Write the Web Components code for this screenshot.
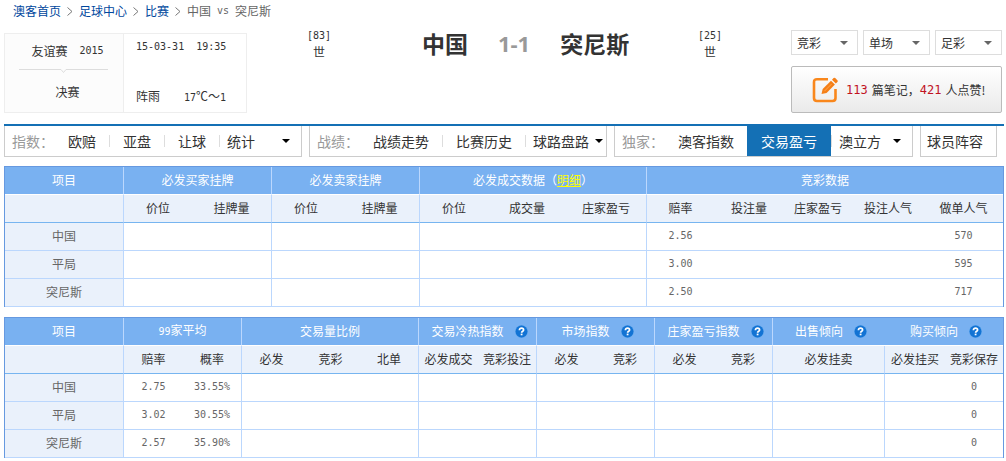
<!DOCTYPE html>
<html lang="zh-CN">
<head>
<meta charset="utf-8">
<title>中国 vs 突尼斯 - 交易盈亏</title>
<style>
html{background:#fff}
body{margin:0;font:12px/18px "Noto Sans CJK SC",sans-serif;color:#333}
</style>
</head>
<body>
<match-page></match-page>

<script>
const NUM = '.n{font:10px/18px "DejaVu Sans Mono",monospace}';

function define(name, html, setup) {
  customElements.define(name, class extends HTMLElement {
    constructor() {
      super();
      this.attachShadow({ mode: 'open' }).innerHTML = html;
    }
    connectedCallback() {
      if (setup) setup.call(this, this.shadowRoot);
    }
  });
}

define('help-icon', `
<style>:host{display:inline-flex}svg{display:block}</style>
<svg width="13" height="13" viewBox="0 0 13 13" role="img" aria-label="帮助">
  <circle cx="6.5" cy="6.5" r="6.4" fill="#5ba3ea"/>
  <circle cx="6.5" cy="6.5" r="5.9" fill="#1273d4"/>
  <path d="M4.400 5.200c0-1.300.9-2 2.100-2s2.100.7 2.100 1.800c0 1.200-2 1.300-2 2.700" fill="none" stroke="#fff" stroke-width="1.700"/>
  <rect x="5.700" y="8.600" width="1.800" height="1.700" fill="#fff"/>
</svg>`);

define('bread-crumb', `
<style>
${NUM}
:host{display:block}
nav{display:flex;align-items:center;padding:2px 9px}
a{color:#00479d;text-decoration:none}
svg{margin:0 6px}
.now{display:flex;gap:6px;color:#666}
</style>
<nav aria-label="当前位置">
  <a href="#">澳客首页</a><svg width="6" height="9"><path d="M.5.5l4.500 4-4.500 4" fill="none" stroke="#777"/></svg>
  <a href="#">足球中心</a><svg width="6" height="9"><path d="M.5.5l4.500 4-4.500 4" fill="none" stroke="#777"/></svg>
  <a href="#">比赛</a><svg width="6" height="9"><path d="M.5.5l4.500 4-4.500 4" fill="none" stroke="#777"/></svg>
  <span class="now"><span>中国</span><span class="n">vs</span><span>突尼斯</span></span>
</nav>`);

define('match-info', `
<style>
${NUM}
:host{display:grid;grid-template-columns:119px 121px;border:1px solid #eee;height:78px}
.cup{background:#fcfcfc;border-right:1px solid #eee;display:flex;flex-direction:column;align-items:center;justify-content:space-between;padding:8px 0 11px}
.row{display:flex;gap:12px}
.cup>.row{padding-left:7px}
.when{display:flex;flex-direction:column;justify-content:space-between;padding:4px 12px 5px}
.when .row{gap:12px}
.when .weather{gap:24px}
svg{display:block}
</style>
<div class="cup">
  <div class="row"><span>友谊赛</span><span class="n">2015</span></div>
  <svg width="90" height="5"><path d="M0 .5h42l2.500 3 2.500-3h42" fill="none" stroke="#ddd"/></svg>
  <div class="row">决赛</div>
</div>
<div class="when">
  <div class="row n"><span>15-03-31</span><span>19:35</span></div>
  <div class="row weather"><span>阵雨</span><span><span class="n">17</span>℃～<span class="n">1</span></span></div>
</div>`);

define('match-score', `
<style>
${NUM}
:host{display:flex;justify-content:space-between}
.rank{display:flex;flex-direction:column;align-items:center;width:24px;line-height:16px}
.rank .n{line-height:16px}
.teams{display:flex;gap:30px;align-items:center;height:30px;padding-left:22px;font-size:23px;font-weight:700}
.score{font:700 22px/30px "Open Sans",sans-serif;color:#999}
</style>
<div class="rank"><span class="n">[83]</span><span>世</span></div>
<div class="teams"><span>中国</span><span class="score">1-1</span><span>突尼斯</span></div>
<div class="rank"><span class="n">[25]</span><span>世</span></div>`);

define('lottery-select', `
<style>
:host{display:grid;flex:1;min-width:0;align-items:center}
select,svg{grid-area:1/1}
select{appearance:none;width:100%;height:25px;margin:0;padding:0 5px;border:1px solid #ddd;border-radius:0;background:#fff;font:inherit;color:#333}
svg{justify-self:end;margin-right:10px;pointer-events:none}
</style>
<select><option></option></select>
<svg width="8" height="4"><path d="M0 0h8L4 4z" fill="#666"/></svg>`,
function (root) {
  const select = root.querySelector('select');
  select.setAttribute('aria-label', this.getAttribute('label'));
  root.querySelector('option').textContent = this.getAttribute('label');
});

define('note-button', `
<style>
:host{display:block}
button{display:flex;align-items:center;width:100%;height:47px;padding:0 0 0 20px;border:1px solid #bbb;border-radius:2px;background:linear-gradient(#fff,#eaeaea);font:inherit;color:#333;white-space:nowrap}
svg{margin-right:8px;flex:none}
b{font:12px/18px "DejaVu Sans Mono",monospace;color:#c1121f}
.t{margin-left:4px}
</style>
<button type="button">
  <svg width="26" height="26" viewBox="0 0 26 26" fill="none">
    <path d="M16 2.200H5Q2 2.200 2 5.200v15.800q0 3 3 3h15.500q3 0 3-3V12" stroke="#f9871c" stroke-width="2.600"/>
    <path d="M9.500 17l1.200-5L19 3.700l3.900 3.900-8.300 8.300z" fill="#f57f17"/>
    <path d="M20 2.700l1.600-1.600q.8-.8 1.600 0L25.400 3.300q.8.800 0 1.600L23.800 6.500z" fill="#f57f17"/>
    <path d="M12.400 14.200l7.300-7.300" stroke="#ffb060" stroke-width=".8"/>
  </svg>
  <b>113</b><span class="t">篇笔记，</span><b>421</b><span class="t">人点赞!</span>
</button>`);

define('nav-group', `
<style>
:host{display:flex;align-items:center;min-width:0;height:30px;padding-left:7px;border:1px solid #ccc;border-top:0;font-size:14px;color:#999;white-space:nowrap}
:host([plain]){padding-left:6px}
.label{width:43px;flex:none}
:host([plain]) .label{display:none}
</style>
<span class="label"></span><slot></slot>`,
function (root) {
  root.querySelector('.label').textContent = this.getAttribute('label') || '';
});

define('nav-item', `
<style>
:host{display:flex;align-items:center}
:host([sep])::after{content:"";width:1px;height:12px;background:#ddd}
:host([grow]){flex:1}
a,button{font:14px/30px "Noto Sans CJK SC",sans-serif;color:#333;text-decoration:none;padding:0 13px}
:host([active]) a{background:#1470b5;color:#fff;padding:0 14px}
:host([plain]) a{padding:0}
button{display:flex;flex:1;align-items:center;justify-content:space-between;border:0;background:none;padding:0 11px 0 7px}
:host([tight]) button{padding-right:3px}
svg{display:none}
button svg{display:block}
</style>`,
function (root) {
  const menu = this.hasAttribute('grow');
  const el = document.createElement(menu ? 'button' : 'a');
  if (menu) el.type = 'button'; else el.href = '#';
  el.innerHTML = '<slot></slot><svg width="8" height="4"><path d="M0 0h8L4 4z" fill="#000"/></svg>';
  root.append(el);
});

define('match-nav', `
<style>
:host{display:block;border-top:2px solid #1470b5}
nav{display:grid;grid-template-columns:298fr 298fr 299fr 77fr;gap:7px;margin-right:7px}
</style>
<nav aria-label="数据导航">
  <nav-group label="指数："><nav-item sep>欧赔</nav-item><nav-item sep>亚盘</nav-item><nav-item sep>让球</nav-item><nav-item grow>统计</nav-item></nav-group>
  <nav-group label="战绩："><nav-item sep>战绩走势</nav-item><nav-item sep>比赛历史</nav-item><nav-item grow tight>球路盘路</nav-item></nav-group>
  <nav-group label="独家："><nav-item>澳客指数</nav-item><nav-item active sep>交易盈亏</nav-item><nav-item grow>澳立方</nav-item></nav-group>
  <nav-group plain><nav-item plain>球员阵容</nav-item></nav-group>
</nav>`);

const TABLES = {
  exchange: {
    cols: [119, 68, 80, 68, 80, 68, 78, 81, 67, 70, 68, 72, 79],
    groups: [['项目', 1], ['必发买家挂牌', 2], ['必发卖家挂牌', 2], ['必发成交数据（<a href="#">明细</a>）', 3], ['竞彩数据', 5]],
    subs: ['', '价位', '挂牌量', '价位', '挂牌量', '价位', '成交量', '庄家盈亏', '赔率', '投注量', '庄家盈亏', '投注人气', '做单人气'],
    ends: [0, 2, 4, 7],
    rows: [['中国', { 8: '2.56', 12: '570' }], ['平局', { 8: '3.00', 12: '595' }], ['突尼斯', { 8: '2.50', 12: '717' }]]
  },
  index: {
    cols: [119, 59, 59, 59, 59, 59, 59, 59, 59, 59, 59, 59, 112, 60, 58],
    groups: [['项目', 1], ['<span class="n">99</span>家平均', 2], ['交易量比例', 3], ['交易冷热指数', 2, 1], ['市场指数', 2, 1], ['庄家盈亏指数', 2, 1], ['出售倾向', 1, 1], ['购买倾向', 2, 1]],
    subs: ['', '赔率', '概率', '必发', '竞彩', '北单', '必发成交', '竞彩投注', '必发', '竞彩', '必发', '竞彩', '必发挂卖', '必发挂买', '竞彩保存'],
    ends: [0, 2, 5, 7, 9, 11, 12],
    rows: [['中国', { 1: '2.75', 2: '33.55%', 14: '0' }], ['平局', { 1: '3.02', 2: '30.55%', 14: '0' }], ['突尼斯', { 1: '2.57', 2: '35.90%', 14: '0' }]]
  }
};

define('odds-table', `
<style>
${NUM}
:host{display:block}
table{width:100%;table-layout:fixed;border-collapse:separate;border-spacing:0;border:solid #6699e0;border-width:1px 1px 0;line-height:18px}
th,td{box-sizing:border-box;height:28px;padding:0 0 1px;font-weight:400;text-align:center;white-space:nowrap;border-bottom:1px solid #bbd7fd}
.e{border-right:1px solid #bbd7fd}
.g th{background:#79b1f1;color:#fff;border-bottom-color:#fff}
.g a{color:#ff0;text-decoration:underline}
.s th{background:#eaf1fb;color:#333;border-bottom-color:#77b5f0}
tbody th{background:#eaf1fb;color:#666}
td{color:#666}
.h{display:flex;align-items:center;justify-content:center;gap:11px;padding-left:4px}
</style>
<table></table>`,
function (root) {
  const t = TABLES[this.getAttribute('name')];
  const end = i => t.ends.includes(i) ? ' e' : '';
  const split = (g, i) => i < t.groups.length - 1 && g[0] !== '出售倾向' ? ' class="e"' : '';
  root.querySelector('table').innerHTML =
    '<colgroup>' + t.cols.map(w => `<col style="width:${w}px">`).join('') + '</colgroup>' +
    '<thead><tr class="g">' + t.groups.map((g, i) =>
      `<th colspan="${g[1]}"${split(g, i)}>${g[2] ? `<div class="h">${g[0]}<help-icon></help-icon></div>` : g[0]}</th>`).join('') +
    '</tr><tr class="s">' + t.subs.map((s, i) => `<th class="${end(i)}">${s}</th>`).join('') + '</tr></thead><tbody>' +
    t.rows.map(([name, vals]) => `<tr><th scope="row" class="e">${name}</th>` +
      t.subs.slice(1).map((_, i) => `<td class="n${end(i + 1)}">${vals[i + 1] || ''}</td>`).join('') + '</tr>').join('') + '</tbody>';
});

define('match-page', `
<style>
:host{display:block;padding:0 2px 0 4px}
header{display:grid;grid-template-columns:243px 1fr 211px;margin-right:2px;height:94px}
match-info{margin-top:11px;align-self:start}
match-score{margin:6px 69px 0 60px}
.tools{display:flex;flex-direction:column;gap:11px;padding-top:8px}
.picks{display:flex;gap:5px}
match-nav{margin:8px 0 9px}
odds-table+odds-table{margin-top:10px}
</style>
<bread-crumb></bread-crumb>
<header>
  <match-info></match-info>
  <match-score></match-score>
  <div class="tools">
    <div class="picks"><lottery-select label="竞彩"></lottery-select><lottery-select label="单场"></lottery-select><lottery-select label="足彩"></lottery-select></div>
    <note-button></note-button>
  </div>
</header>
<main>
  <match-nav></match-nav>
  <odds-table name="exchange"></odds-table>
  <odds-table name="index"></odds-table>
</main>`);
</script>
</body>
</html>
